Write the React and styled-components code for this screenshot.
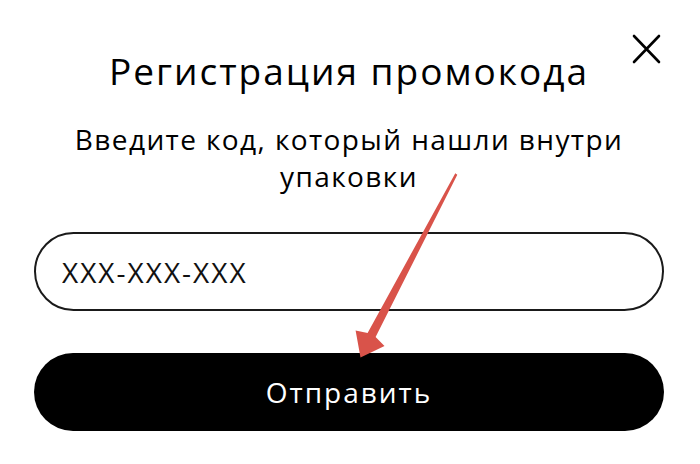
import React from "react";
import styled, { createGlobalStyle } from "styled-components";

const GlobalStyle = createGlobalStyle`
  html, body {
    margin: 0;
    padding: 0;
    background: #ffffff;
  }
  body {
    font-family: "Open Sans", "Noto Sans", sans-serif;
    color: #000;
  }
  * { box-sizing: border-box; }
`;

const Dialog = styled.div`
  position: relative;
  width: 700px;
  min-height: 464px;
  padding: 49px 36px 0 34px;
  display: flex;
  flex-direction: column;
  background: #fff;
`;

const CloseButton = styled.button`
  position: absolute;
  top: 34px;
  left: 632px;
  width: 30px;
  height: 30px;
  padding: 0;
  border: none;
  background: transparent;
  display: flex;
  align-items: center;
  justify-content: center;
  cursor: pointer;
`;

const Title = styled.h2`
  margin: 0;
  font-size: 37px;
  line-height: 44px;
  font-weight: 400;
  letter-spacing: 2px;
  text-align: center;
  color: #000;
`;

const Subtitle = styled.p`
  margin: 28px 0 0;
  font-size: 28px;
  line-height: 37px;
  font-weight: 400;
  letter-spacing: 1.4px;
  text-align: center;
  color: #000;
`;

const Form = styled.form`
  margin-top: 37px;
  display: flex;
  flex-direction: column;
  gap: 42px;
`;

const CodeInput = styled.input`
  width: 100%;
  height: 79px;
  padding: 0 26px;
  border: 2px solid #1a1a1a;
  border-radius: 40px;
  background: #fff;
  font-family: "Open Sans", "Noto Sans", sans-serif;
  font-size: 28px;
  letter-spacing: 2px;
  color: #111;
  outline: none;
  &::placeholder {
    color: #111;
    opacity: 1;
  }
`;

const SubmitButton = styled.button`
  width: 100%;
  height: 78px;
  border: none;
  border-radius: 39px;
  background: #000;
  color: #fff;
  font-family: "Open Sans", "Noto Sans", sans-serif;
  font-size: 28px;
  letter-spacing: 2px;
  cursor: pointer;
`;

const ArrowOverlay = styled.svg`
  position: absolute;
  left: 0;
  top: 0;
  width: 700px;
  height: 464px;
  pointer-events: none;
`;

export default function App() {
  return (
    <>
      <GlobalStyle />
      <Dialog>
        <CloseButton aria-label="Закрыть">
          <svg width="30" height="30" viewBox="0 0 30 30">
            <path
              d="M2 2 L27 28 M27 2 L2 28"
              stroke="#000"
              strokeWidth="2.6"
              strokeLinecap="round"
              fill="none"
            />
          </svg>
        </CloseButton>
        <Title>Регистрация промокода</Title>
        <Subtitle>Введите код, который нашли внутри упаковки</Subtitle>
        <Form onSubmit={(e) => e.preventDefault()}>
          <CodeInput placeholder="XXX-XXX-XXX" />
          <SubmitButton type="submit">Отправить</SubmitButton>
        </Form>
        <ArrowOverlay viewBox="0 0 700 464">
          <polygon
            points="457.3,174.7 375.6,337 384.5,346 360.5,357.5 355.6,330.6 367.6,332.9 455.3,173.3"
            fill="#d9534a"
          />
        </ArrowOverlay>
      </Dialog>
    </>
  );
}
